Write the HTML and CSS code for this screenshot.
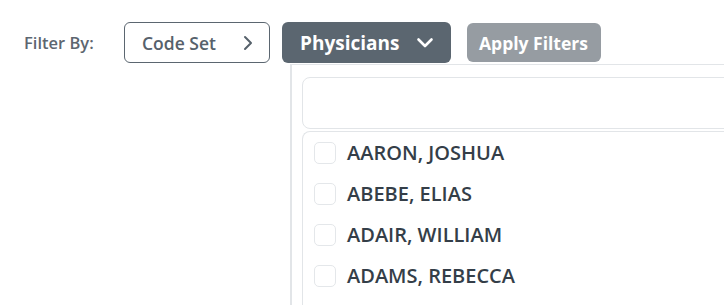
FILE: index.html
```html
<!DOCTYPE html>
<html lang="en">
<head>
    <meta charset="UTF-8">
    <meta name="viewport" content="width=device-width, initial-scale=1.0">
    <link rel="stylesheet" href="styles.css">
    <title>Filters</title>
</head>
<body>
    <div class="filter-bar">
        <span class="filter-label">Filter By:</span>
        <button class="btn btn-outline">
            Code Set
            <svg class="chev" width="12" height="16" viewBox="0 0 12 16"><path d="M3 2 L9 8 L3 14" fill="none" stroke="currentColor" stroke-width="2" stroke-linecap="round" stroke-linejoin="round"/></svg>
        </button>
        <button class="btn btn-dark">
            Physicians
            <svg class="chev" width="18" height="12" viewBox="0 0 18 12"><path d="M2.5 2.5 L9 9 L15.5 2.5" fill="none" stroke="currentColor" stroke-width="2.6" stroke-linecap="round" stroke-linejoin="round"/></svg>
        </button>
        <button class="btn btn-disabled">Apply Filters</button>
    </div>
    <div class="dropdown-panel">
        <input class="search" type="text">
        <div class="list">
            <label class="item"><span class="box"></span>AARON, JOSHUA</label>
            <label class="item"><span class="box"></span>ABEBE, ELIAS</label>
            <label class="item"><span class="box"></span>ADAIR, WILLIAM</label>
            <label class="item"><span class="box"></span>ADAMS, REBECCA</label>
        </div>
    </div>
</body>
</html>
```

FILE: styles.css
```css
body {
    margin: 0;
    width: 724px;
    height: 305px;
    overflow: hidden;
    background-color: #fff;
    font-family: "Open Sans", sans-serif;
}
.filter-bar {
    display: flex;
    align-items: center;
    padding: 22px 0 0 24px;
}
.filter-label {
    width: 100px;
    font-size: 16.5px;
    font-weight: 600;
    color: #5d6670;
    margin-top: -1px;
}
.btn {
    display: flex;
    align-items: center;
    justify-content: space-between;
    box-sizing: border-box;
    height: 41px;
    border-radius: 6px;
    font-family: "Open Sans", sans-serif;
    font-size: 17px;
    cursor: pointer;
}
.btn-outline {
    width: 146px;
    padding: 0 15px 0 17px;
    border: 1px solid #5b6670;
    background: #fff;
    color: #56616b;
    font-size: 17.5px;
    font-weight: 600;
}
.btn-dark {
    width: 169px;
    margin-left: 12px;
    padding: 0 17px 0 18px;
    border: none;
    background: #5b6670;
    color: #fff;
    font-size: 19px;
    font-weight: 700;
}
.btn-disabled {
    width: 134px;
    height: 39px;
    margin-left: 16px;
    padding: 0 12px;
    border: none;
    background: #969ca2;
    color: #fff;
    font-size: 17.5px;
    font-weight: 700;
}
.dropdown-panel {
    box-sizing: border-box;
    margin: 1px 0 0 290px;
    height: 241px;
    padding: 12px 0 0 10px;
    border-top: 1px solid #e2e5e8;
    border-left: 2px solid #e2e5e8;
    overflow: hidden;
}
.search {
    display: block;
    box-sizing: border-box;
    width: 440px;
    height: 52px;
    border: 1px solid #e2e5e8;
    border-radius: 8px;
    outline: none;
}
.list {
    margin-top: 2px;
    border-top: 1px solid #e2e5e8;
    border-left: 1px solid #e2e5e8;
    border-top-left-radius: 8px;
    height: 174px;
}
.item {
    display: flex;
    align-items: center;
    height: 41px;
    padding-left: 11px;
    font-size: 20px;
    font-weight: 600;
    color: #343e48;
}
.box {
    width: 22px;
    height: 22px;
    box-sizing: border-box;
    border: 1px solid #e4e7ea;
    border-radius: 5px;
    margin-right: 11px;
}
```
